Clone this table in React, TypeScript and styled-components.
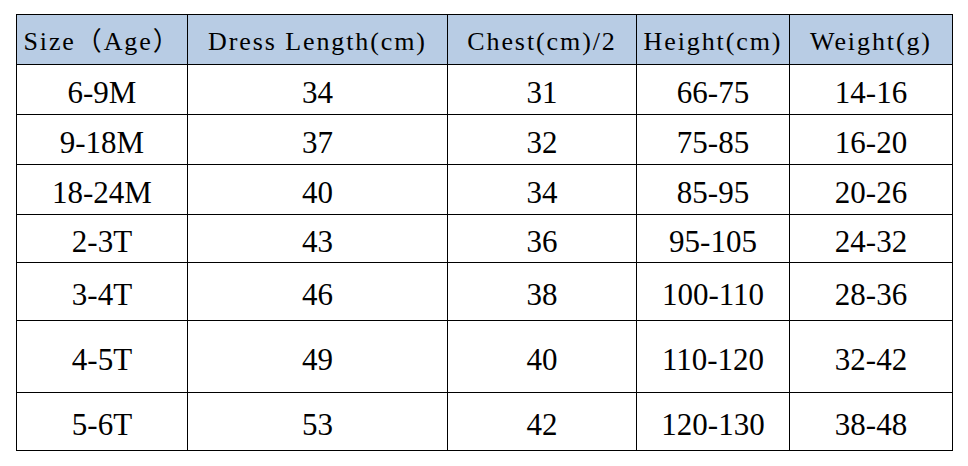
import React from "react";
import styled, { createGlobalStyle } from "styled-components";

const GlobalStyle = createGlobalStyle`
  html, body {
    margin: 0;
    padding: 0;
    background: #ffffff;
  }
  body {
    font-family: "Liberation Serif", "Noto Sans CJK SC", serif;
  }
`;

const Page = styled.div`
  width: 968px;
  height: 466px;
  padding: 14px 0 0 16px;
  box-sizing: border-box;
  background: #ffffff;
`;

const Table = styled.table`
  border-collapse: collapse;
  table-layout: fixed;
  width: 936px;
`;

const Row = styled.tr<{ $h: number }>`
  height: ${(p) => p.$h}px;
`;

const HeadCell = styled.th`
  padding: 4px 0 0 0;
  background: #b8cce4;
  border: 1px solid #000;
  color: #000;
  font-family: "Liberation Serif", "Noto Sans CJK SC", serif;
  font-weight: normal;
  font-size: 26px;
  line-height: 30px;
  letter-spacing: 1.9px;
  text-align: center;
  vertical-align: middle;
  white-space: nowrap;
`;

const Cell = styled.td`
  padding: 7px 0 0 0;
  border: 1px solid #000;
  color: #000;
  font-family: "Liberation Serif", serif;
  font-size: 31px;
  line-height: 34px;
  text-align: center;
  vertical-align: middle;
  white-space: nowrap;
`;

const widths = [171, 260, 189, 153, 163];
const headers = ["Size（Age）", "Dress Length(cm)", "Chest(cm)/2", "Height(cm)", "Weight(g)"];

const rows: { h: number; cells: string[] }[] = [
  { h: 50, cells: ["6-9M", "34", "31", "66-75", "14-16"] },
  { h: 50, cells: ["9-18M", "37", "32", "75-85", "16-20"] },
  { h: 50, cells: ["18-24M", "40", "34", "85-95", "20-26"] },
  { h: 48, cells: ["2-3T", "43", "36", "95-105", "24-32"] },
  { h: 58, cells: ["3-4T", "46", "38", "100-110", "28-36"] },
  { h: 72, cells: ["4-5T", "49", "40", "110-120", "32-42"] },
  { h: 58, cells: ["5-6T", "53", "42", "120-130", "38-48"] },
];

export default function App() {
  return (
    <>
      <GlobalStyle />
      <Page>
        <Table>
          <colgroup>
            {widths.map((w, i) => (
              <col key={i} style={{ width: w }} />
            ))}
          </colgroup>
          <thead>
            <Row $h={50}>
              {headers.map((h) => (
                <HeadCell key={h}>{h}</HeadCell>
              ))}
            </Row>
          </thead>
          <tbody>
            {rows.map((r, i) => (
              <Row key={i} $h={r.h}>
                {r.cells.map((c, j) => (
                  <Cell key={j}>{c}</Cell>
                ))}
              </Row>
            ))}
          </tbody>
        </Table>
      </Page>
    </>
  );
}
